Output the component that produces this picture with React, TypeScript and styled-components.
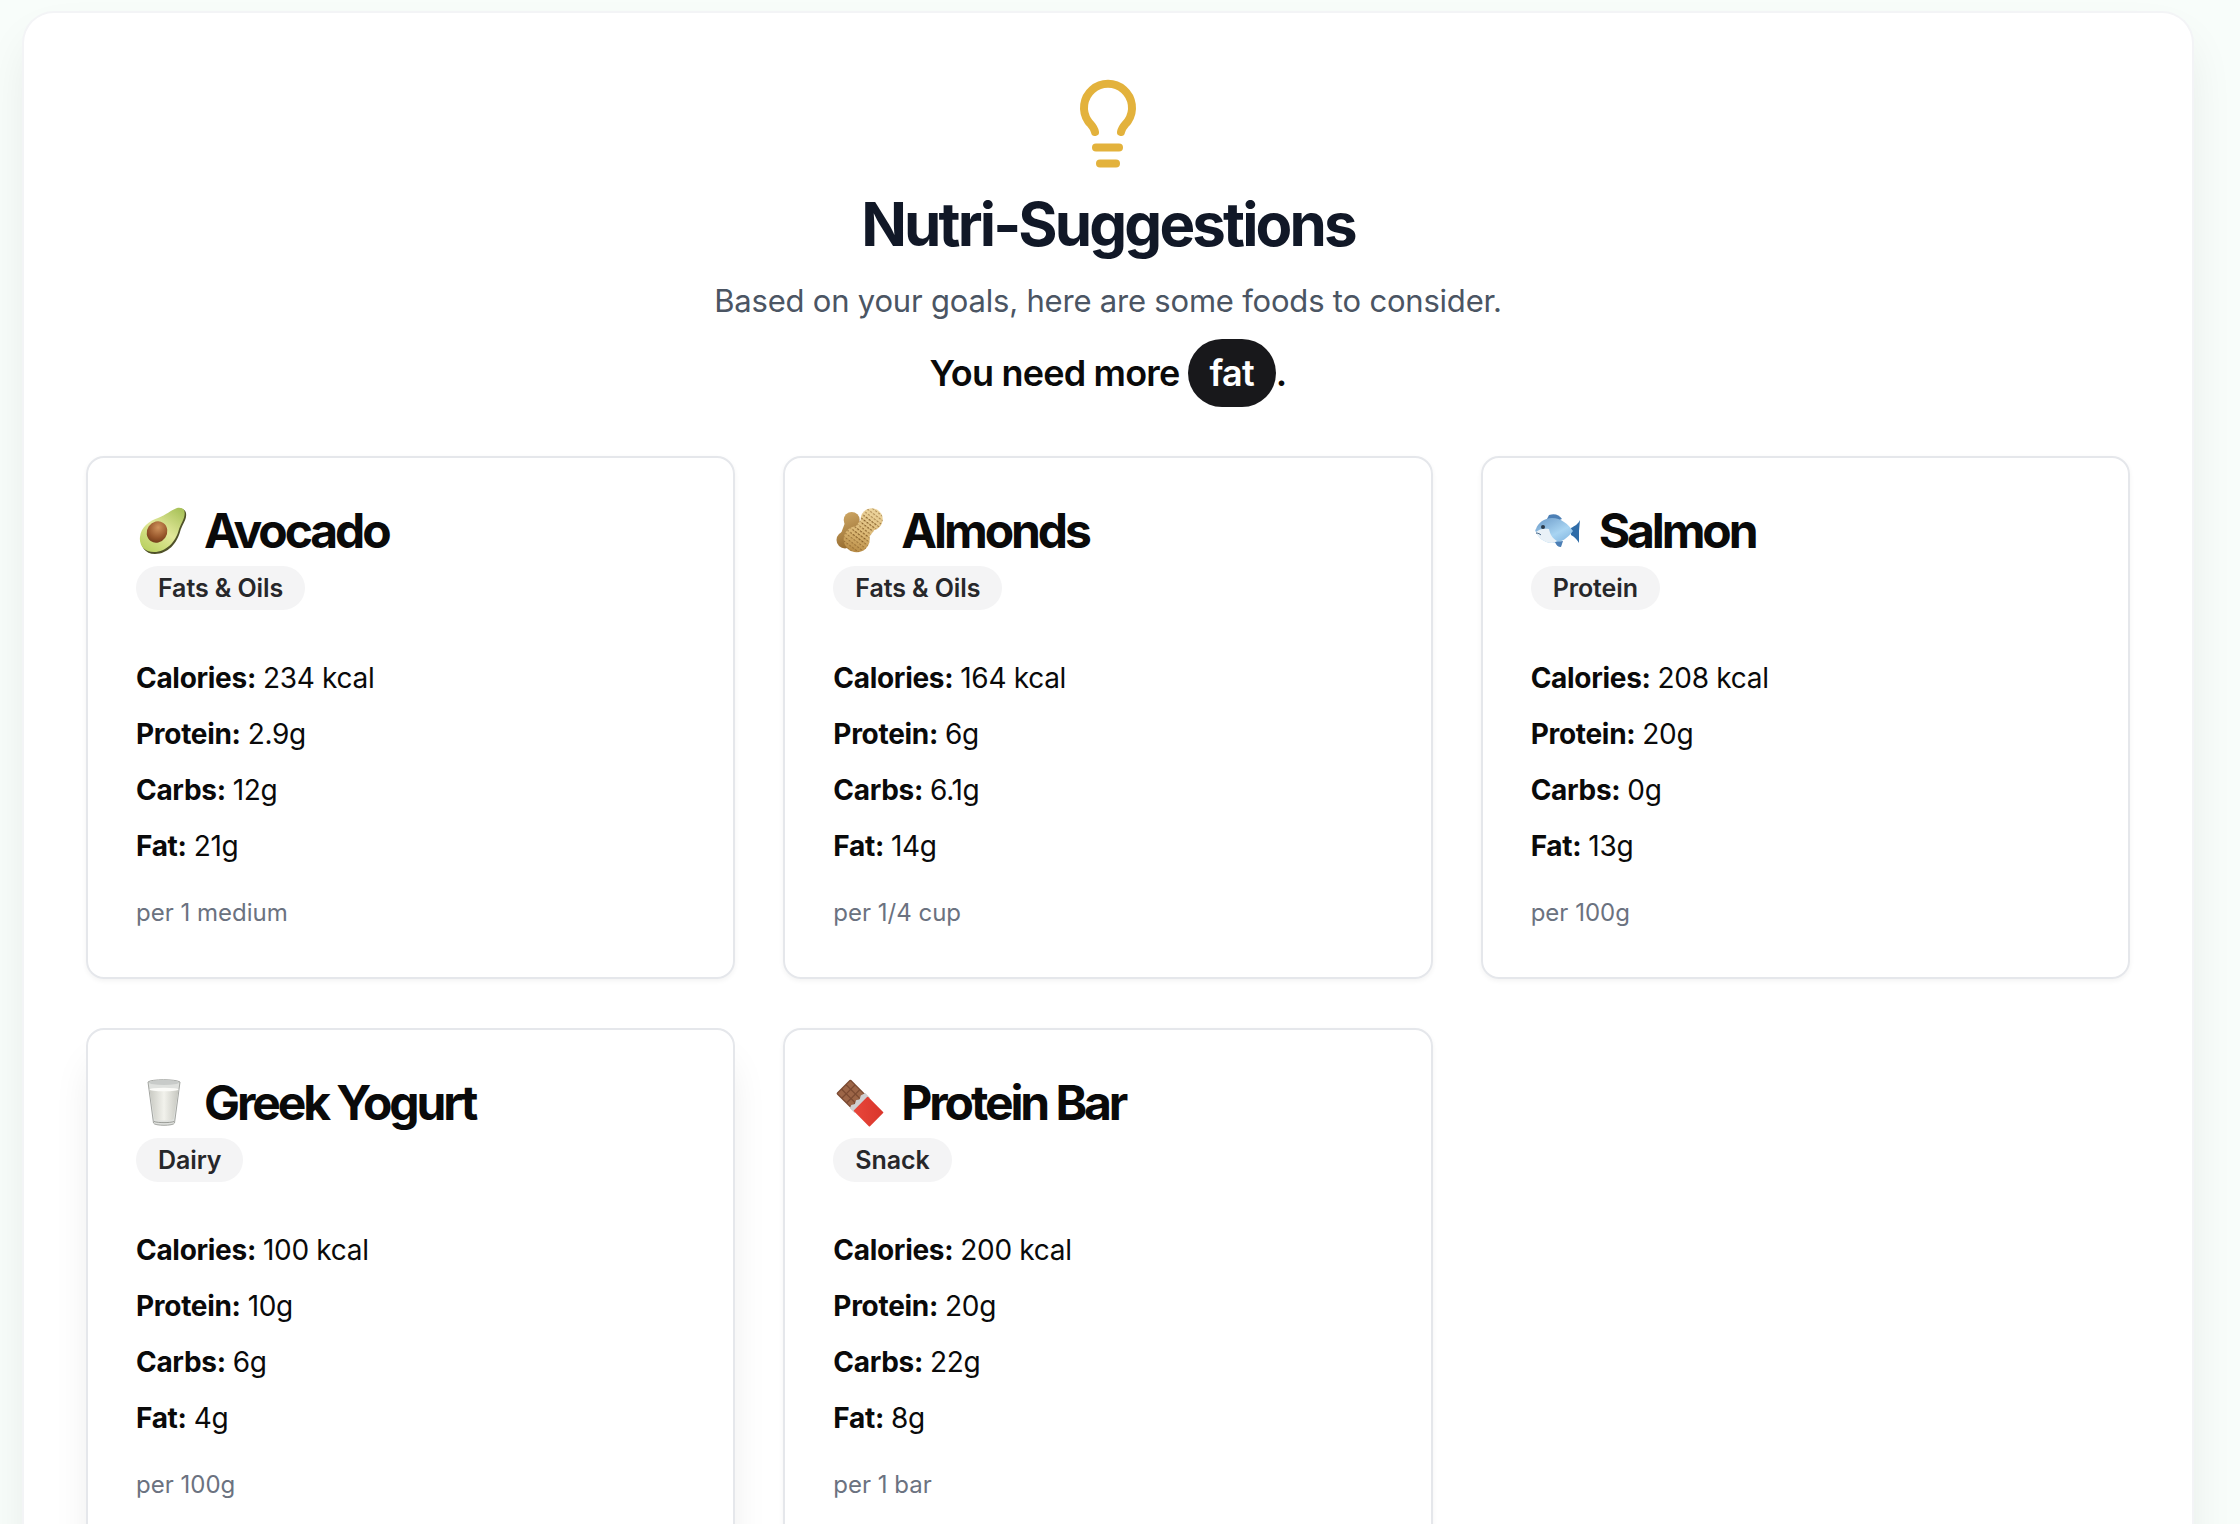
import React from "react";
import styled, {createGlobalStyle} from "styled-components";

const GlobalStyle = createGlobalStyle`
  html, body {
    margin: 0;
    padding: 0;
    height: 100%;
    overflow: hidden;
    background-color: #f8fdfa;
    font-family: "Inter", "Liberation Sans", sans-serif;
    color: #0a0a0a;
  }
`;

const Page = styled.div`
  padding: 11px 46px 0 22px;
  height: 1524px;
  box-sizing: border-box;
  overflow: hidden;
`;

const Panel = styled.main`
  background-color: #ffffff;
  border: 2px solid #f3f4f6;
  border-bottom: 0;
  border-radius: 32px 32px 0 0;
  box-shadow: 0 24px 50px -8px rgba(0, 0, 0, 0.09);
  padding: 63px 62px 64px 62px;
`;

const Header = styled.header`
  display: flex;
  flex-direction: column;
  align-items: center;
  margin-bottom: 49px;
`;

const Title = styled.h1`
  margin: 16px 0 0 0;
  font-size: 60px;
  line-height: 72px;
  font-weight: 700;
  letter-spacing: -2.85px;
  color: #111827;
`;

const Subtitle = styled.p`
  margin: 21px 0 0 0;
  font-size: 31px;
  line-height: 40px;
  letter-spacing: -0.2px;
  color: #4b5563;
`;

const Need = styled.p`
  margin: 18px 0 0 0;
  font-size: 36px;
  line-height: 68px;
  font-weight: 600;
  letter-spacing: -0.8px;
  display: flex;
  align-items: center;
`;

const Pill = styled.span`
  display: inline-block;
  margin-left: 8px;
  padding: 0 22px;
  height: 68px;
  background-color: #18181b;
  color: #ffffff;
  border-radius: 34px;
`;

const Grid = styled.section`
  display: grid;
  grid-template-columns: repeat(3, 1fr);
  gap: 49px 48px;
`;

const Card = styled.article<{$raised?: boolean}>`
  border: 2px solid #e5e7eb;
  border-radius: 18px;
  box-shadow: ${(props) => props.$raised ? "0 30px 40px -8px rgba(0, 0, 0, 0.1)" : "0 2px 5px rgba(0, 0, 0, 0.05)"};
  padding: 46px 48px 48px 48px;
  height: 523px;
  box-sizing: border-box;
`;

const CardTitle = styled.h2`
  margin: 0;
  display: flex;
  align-items: center;
  gap: 14px;
  font-size: 48px;
  line-height: 48px;
  font-weight: 700;
  letter-spacing: -3.1px;
`;

const Tag = styled.span`
  display: inline-block;
  margin-top: 8px;
  padding: 0 22px;
  height: 44px;
  line-height: 44px;
  font-size: 25px;
  font-weight: 600;
  letter-spacing: -0.1px;
  color: #27272a;
  background-color: #f4f4f5;
  border-radius: 22px;
`;

const Facts = styled.dl`
  margin: 40px 0 0 0;
`;

const Fact = styled.div`
  font-size: 28px;
  line-height: 56px;
  letter-spacing: -0.3px;
`;

const Label = styled.dt`
  display: inline;
  font-weight: 700;
`;

const Value = styled.dd`
  display: inline;
  margin: 0 0 0 7px;
`;

const Serving = styled.p`
  margin: 23px 0 0 0;
  font-size: 24px;
  line-height: 32px;
  color: #6b7280;
`;

const Bulb = () => (
    <svg width="64" height="96" viewBox="0 0 64 96" fill="none" stroke="#e3b23c" strokeWidth="8" strokeLinecap="round">
        <path d="M19 56C18 51 15 49 12 45A24 24 0 1 1 52 45C49 49 46 51 45 56" />
        <path d="M20 71.5H43" />
        <path d="M24 87.5H40" />
    </svg>
);

const EmojiBox = styled.svg`
  flex: none;
  width: 54px;
  height: 54px;
`;

const AvocadoIcon = () => (
    <EmojiBox viewBox="-3 -3 54 54">
        <defs>
            <linearGradient id="avoFlesh" x1="0.85" y1="0" x2="0.15" y2="1">
                <stop offset="0" stopColor="#a9c25a" />
                <stop offset="0.5" stopColor="#e2e89a" />
                <stop offset="1" stopColor="#b8d05e" />
            </linearGradient>
            <radialGradient id="avoPit" cx="0.42" cy="0.3" r="0.75">
                <stop offset="0" stopColor="#d0935c" />
                <stop offset="0.65" stopColor="#96552a" />
                <stop offset="1" stopColor="#6e3a18" />
            </radialGradient>
        </defs>
        <path d="M39 2C45 1 48 4 47 10C46 15 43 18 41 25C38 36 29 47 16 47C6 47 1 39 2 31C3 21 11 15 20 12C28 9 33 4 39 2Z" fill="#4f5128" />
        <path d="M38 1C44 0 46.5 3 45.5 8.500C44.5 14 41.5 17 39.5 24C36.5 34.500 27.5 45 15 45C5 45 0 38 1 30C2 20 10 14 19 11C27 8 32 3 38 1Z" fill="url(#avoFlesh)" />
        <ellipse cx="18" cy="25" rx="10" ry="11" transform="rotate(35 18 25)" fill="url(#avoPit)" />
    </EmojiBox>
);

const PeanutIcon = () => (
    <EmojiBox viewBox="-4 -3 54 54">
        <defs>
            <linearGradient id="nutBack" gradientUnits="userSpaceOnUse" x1="4" y1="6" x2="20" y2="42">
                <stop offset="0" stopColor="#cfa866" />
                <stop offset="1" stopColor="#8f6428" />
            </linearGradient>
            <linearGradient id="nutFront" gradientUnits="userSpaceOnUse" x1="36" y1="2" x2="22" y2="46">
                <stop offset="0" stopColor="#efd7a0" />
                <stop offset="0.6" stopColor="#dcb874" />
                <stop offset="1" stopColor="#b98d47" />
            </linearGradient>
            <pattern id="nutDots" width="3.6" height="3.6" patternUnits="userSpaceOnUse" patternTransform="rotate(37)">
                <rect x="0.4" y="1" width="2" height="1" fill="#7d5520" opacity="0.75" />
            </pattern>
        </defs>
        <g fill="url(#nutBack)">
            <circle cx="14.7" cy="13" r="8" />
            <circle cx="8" cy="33" r="8.500" />
            <polygon points="20.4,14.9 9,13.1 2.3,31.100 13.700,34.900" />
        </g>
        <g fill="url(#nutFront)">
            <circle cx="34.7" cy="12.3" r="11" />
            <circle cx="19.7" cy="32.300" r="13" />
            <polygon points="41.5,17.4 27.900,7.200 12.9,27.200 26.500,37.400" />
        </g>
        <g fill="url(#nutDots)">
            <circle cx="34.7" cy="12.3" r="11" />
            <circle cx="19.7" cy="32.300" r="13" />
            <polygon points="41.5,17.4 27.900,7.200 12.9,27.200 26.500,37.400" />
        </g>
    </EmojiBox>
);

const FishIcon = () => (
    <EmojiBox viewBox="-4 -10 54 54">
        <defs>
            <linearGradient id="fishBody" x1="0.1" y1="0" x2="0.9" y2="1">
                <stop offset="0" stopColor="#6f9ecb" />
                <stop offset="0.6" stopColor="#a8d4f2" />
                <stop offset="1" stopColor="#7fb4e0" />
            </linearGradient>
        </defs>
        <path d="M14 1C20 -1 24 1 27 5L22 7L12 5Z" fill="#4c7fb5" />
        <path d="M44 17L45 6C44 9 40 12 36 14L36 21C40 23 43 27 44 29Z" fill="#2f6ca8" />
        <path d="M1 15C3 9 9 4 17 4C26 4 33 10 38 17C33 24 26 29 17 29C9 29 3 23 1 18C0 17 0 16 1 15Z" fill="url(#fishBody)" />
        <path d="M1 18C3 23 9 29 17 29C19 29 21 28 22 27C17 24 15 20 14 15C9 14 4 15 1 18Z" fill="#e9f1f7" />
        <path d="M20 28L28 27L26 33C23 33 21 31 20 28Z" fill="#4c7fb5" />
        <circle cx="8" cy="13" r="2" fill="#2b3a4a" />
        <path d="M1 19C3 19 5 20 6 21" stroke="#3b5d80" strokeWidth="1" fill="none" />
    </EmojiBox>
);

const MilkIcon = () => (
    <EmojiBox viewBox="-12 -3 54 54">
        <defs>
            <linearGradient id="milkFill" x1="0" y1="0" x2="1" y2="0">
                <stop offset="0" stopColor="#c9cac3" />
                <stop offset="0.5" stopColor="#f2f2ec" />
                <stop offset="1" stopColor="#c6c7c0" />
            </linearGradient>
        </defs>
        <path d="M0 3C3 0 28 0 32 3L26.5 44C26 47 6 47 5.5 44Z" fill="#dfe1de" stroke="#a3a5a1" strokeWidth="1" />
        <ellipse cx="16" cy="3.500" rx="15" ry="2.500" fill="#c8cbc9" />
        <path d="M1.5 11C8 9 24 9 30.5 11L25.5 40C24 42 8 42 6.500 40Z" fill="url(#milkFill)" />
        <ellipse cx="16" cy="10.500" rx="14.500" ry="1.800" fill="#fbfbf8" />
        <path d="M6 42.500C10 44 22 44 26 42.500" stroke="#9a9c97" strokeWidth="1" fill="none" />
    </EmojiBox>
);

const ChocolateIcon = () => (
    <EmojiBox viewBox="-2 -2 52 52">
        <defs>
            <linearGradient id="wrapRed" x1="0" y1="0" x2="1" y2="1">
                <stop offset="0" stopColor="#e8473b" />
                <stop offset="1" stopColor="#d9352b" />
            </linearGradient>
        </defs>
        <g transform="rotate(-45 24 24) translate(4.5 4.500) scale(0.81)">
            <rect x="12" y="-4" width="24" height="28" rx="1.500" fill="#7b4a32" />
            <g fill="#9c6547">
                <rect x="13.500" y="-2.500" width="6" height="6.500" />
                <rect x="21" y="-2.500" width="6" height="6.500" />
                <rect x="28.500" y="-2.500" width="6" height="6.500" />
                <rect x="13.500" y="5.500" width="6" height="6.500" />
                <rect x="21" y="5.500" width="6" height="6.500" />
                <rect x="28.500" y="5.500" width="6" height="6.500" />
                <rect x="13.500" y="13.500" width="6" height="6" />
                <rect x="21" y="13.500" width="6" height="6" />
                <rect x="28.500" y="13.500" width="6" height="6" />
            </g>
            <path d="M11 20L15 18.500L19 20.500L23 18.500L27 20.500L31 18.500L37 20V28H11Z" fill="#cfd0d2" />
            <rect x="12" y="25" width="24" height="27" rx="1" fill="url(#wrapRed)" />
        </g>
    </EmojiBox>
);

interface Food {
    name: string;
    category: string;
    calories: string;
    protein: string;
    carbs: string;
    fat: string;
    serving: string;
    icon: React.ReactNode;
    raised?: boolean;
}

const foods: Food[] = [
    {name: "Avocado", category: "Fats & Oils", calories: "234 kcal", protein: "2.9g", carbs: "12g", fat: "21g", serving: "per 1 medium", icon: <AvocadoIcon />},
    {name: "Almonds", category: "Fats & Oils", calories: "164 kcal", protein: "6g", carbs: "6.1g", fat: "14g", serving: "per 1/4 cup", icon: <PeanutIcon />},
    {name: "Salmon", category: "Protein", calories: "208 kcal", protein: "20g", carbs: "0g", fat: "13g", serving: "per 100g", icon: <FishIcon />},
    {name: "Greek Yogurt", category: "Dairy", calories: "100 kcal", protein: "10g", carbs: "6g", fat: "4g", serving: "per 100g", icon: <MilkIcon />, raised: true},
    {name: "Protein Bar", category: "Snack", calories: "200 kcal", protein: "20g", carbs: "22g", fat: "8g", serving: "per 1 bar", icon: <ChocolateIcon />},
];

const App = () => {
    return (
        <>
            <GlobalStyle />
            <Page>
                <Panel>
                    <Header>
                        <Bulb />
                        <Title>Nutri-Suggestions</Title>
                        <Subtitle>Based on your goals, here are some foods to consider.</Subtitle>
                        <Need>You need more<Pill>fat</Pill>.</Need>
                    </Header>
                    <Grid>
                        {foods.map((food) => (
                            <Card key={food.name} $raised={food.raised}>
                                <CardTitle>{food.icon}{food.name}</CardTitle>
                                <Tag>{food.category}</Tag>
                                <Facts>
                                    <Fact><Label>Calories:</Label><Value>{food.calories}</Value></Fact>
                                    <Fact><Label>Protein:</Label><Value>{food.protein}</Value></Fact>
                                    <Fact><Label>Carbs:</Label><Value>{food.carbs}</Value></Fact>
                                    <Fact><Label>Fat:</Label><Value>{food.fat}</Value></Fact>
                                </Facts>
                                <Serving>{food.serving}</Serving>
                            </Card>
                        ))}
                    </Grid>
                </Panel>
            </Page>
        </>
    );
};

export default App;
